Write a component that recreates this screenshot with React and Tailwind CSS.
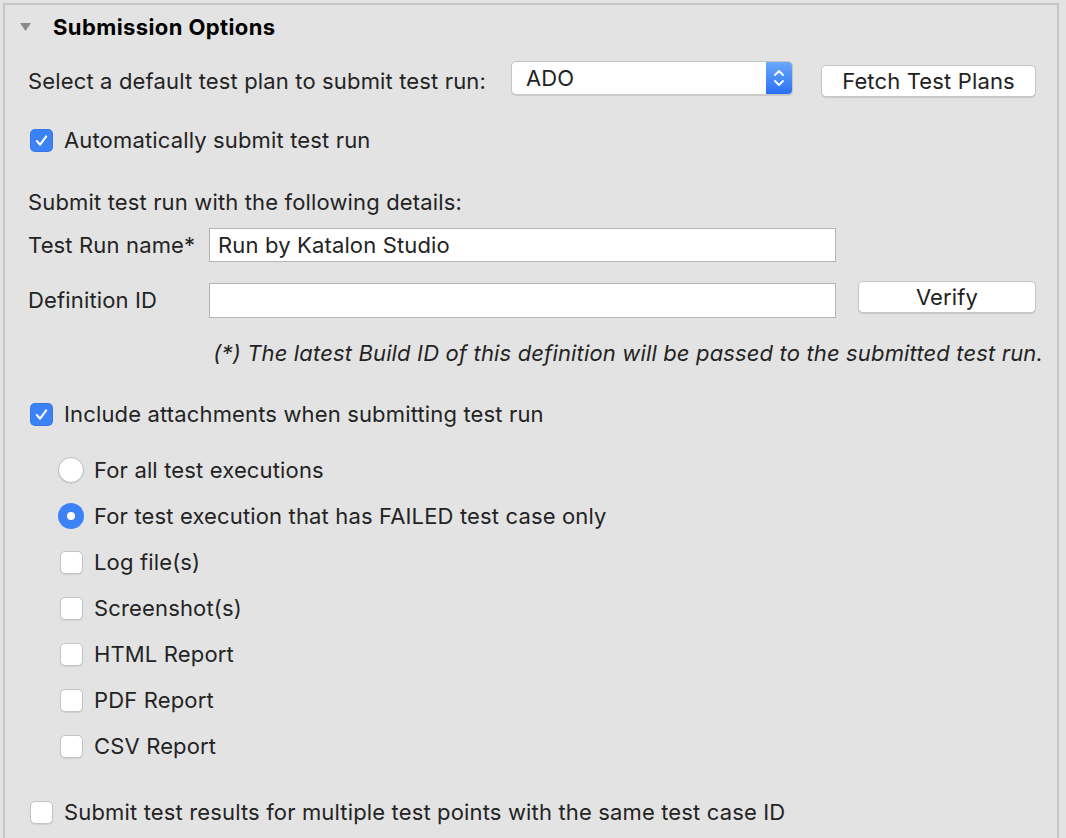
import React from 'react';

const font = { fontFamily: 'Inter, "Noto Sans", sans-serif' };

const Check = ({ checked }) =>
  checked ? (
    <span className="w-[23px] h-[23px] rounded-[5px] bg-[#3b82f6] flex items-center justify-center shrink-0 shadow-[inset_0_0_0_1px_rgba(0,0,0,0.08)]">
      <svg width="15" height="15" viewBox="0 0 16 16" fill="none" stroke="white" strokeWidth="2.2" strokeLinecap="round" strokeLinejoin="round">
        <polyline points="3 8.5 6.5 12.5 13 3.5" />
      </svg>
    </span>
  ) : (
    <span className="w-[23px] h-[23px] rounded-[5px] bg-white border border-[#c3c3c3] shrink-0 shadow-[0_1px_1px_rgba(0,0,0,0.08)]" />
  );

const Radio = ({ on }) =>
  on ? (
    <span className="w-[26px] h-[26px] rounded-full bg-[#3b82f6] flex items-center justify-center shrink-0">
      <span className="w-[8px] h-[8px] rounded-full bg-white" />
    </span>
  ) : (
    <span className="w-[26px] h-[26px] rounded-full bg-white border border-[#bdbdbd] shrink-0 shadow-[0_1px_1px_rgba(0,0,0,0.08)]" />
  );

const MacButton = ({ children, className }) => (
  <div className={`bg-white rounded-[5px] border border-[#c6c6c6] shadow-[0_1px_1px_rgba(0,0,0,0.12)] flex items-center justify-center text-[#222] ${className}`}>
    {children}
  </div>
);

export default function App() {
  const subOptions = [
    { type: 'radio', label: 'For all test executions' },
    { type: 'radio', label: 'For test execution that has FAILED test case only', on: true },
    { type: 'check', label: 'Log file(s)' },
    { type: 'check', label: 'Screenshot(s)' },
    { type: 'check', label: 'HTML Report' },
    { type: 'check', label: 'PDF Report' },
    { type: 'check', label: 'CSV Report' },
  ];

  return (
    <div className="w-[1066px] h-[838px] bg-[#e3e3e3] overflow-hidden pt-[3px] pl-[3px] text-[#232323]" style={font}>
      <div className="w-[1056px] h-[900px] border-2 border-[#c6c6c6] text-[22px] tracking-[0.15px]">
        {/* Header */}
        <div className="h-[45px] flex items-center">
          <svg width="11" height="8" viewBox="0 0 11 8" className="ml-[15px] mt-[-2px]">
            <polygon points="0,0 11,0 5.5,8" fill="#8a8a8e" />
          </svg>
          <span className="ml-[22px] font-bold text-[22px] tracking-[0.4px] text-black">Submission Options</span>
        </div>

        {/* Test plan select */}
        <div className="h-[58px] flex items-center pl-[23px]">
          <span className="w-[483px] mt-[4px]">Select a default test plan to submit test run:</span>
          <div className="w-[282px] h-[34px] flex rounded-[5px] bg-white border border-[#c6c6c6] shadow-[0_1px_1px_rgba(0,0,0,0.12)] overflow-hidden mt-[-2px]">
            <span className="flex-1 flex items-center pl-[14px]">ADO</span>
            <span className="w-[26px] bg-gradient-to-b from-[#6aa8fb] to-[#2a6ff4] flex items-center justify-center">
              <svg width="12" height="22" viewBox="0 0 12 22" fill="none" stroke="white" strokeWidth="1.8" strokeLinecap="round" strokeLinejoin="round">
                <polyline points="2 8 6 4 10 8" />
                <polyline points="2 14 6 18 10 14" />
              </svg>
            </span>
          </div>
          <MacButton className="ml-[28px] w-[215px] h-[32px] mt-[4px]">Fetch Test Plans</MacButton>
        </div>

        {/* Auto submit */}
        <div className="h-[64px] flex items-center pl-[25px] gap-[11px]">
          <Check checked />
          <span>Automatically submit test run</span>
        </div>

        <div className="h-[4px]" />
        <div className="h-[52px] flex items-center pl-[23px]">Submit test run with the following details:</div>

        {/* Test run name */}
        <div className="h-[34px] flex items-center pl-[23px]">
          <span className="w-[181px]">Test Run name*</span>
          <div className="w-[627px] h-[34px] bg-white border border-[#b5b5b5] flex items-center pl-[8px]">Run by Katalon Studio</div>
        </div>

        <div className="h-[21px]" />

        {/* Definition ID */}
        <div className="h-[35px] flex items-center pl-[23px]">
          <span className="w-[181px]">Definition ID</span>
          <div className="w-[627px] h-[35px] bg-white border border-[#b5b5b5]" />
          <MacButton className="ml-[22px] w-[178px] h-[32px] mt-[-7px]">Verify</MacButton>
        </div>

        <div className="h-[18px]" />
        <div className="h-[34px] flex items-center justify-end pr-[14px] italic whitespace-nowrap">
          (*) The latest Build ID of this definition will be passed to the submitted test run.
        </div>

        <div className="h-[20px]" />
        {/* Include attachments */}
        <div className="h-[48px] flex items-center pl-[25px] gap-[11px]">
          <Check checked />
          <span>Include attachments when submitting test run</span>
        </div>

        <div className="h-[9px]" />
        {subOptions.map((o) => (
          <div key={o.label} className="h-[46px] flex items-center">
            {o.type === 'radio' ? (
              <span className="ml-[53px] w-[26px] flex justify-center">
                <Radio on={o.on} />
              </span>
            ) : (
              <span className="ml-[55px] w-[24px] flex">
                <Check />
              </span>
            )}
            <span className="ml-[10px]">{o.label}</span>
          </div>
        ))}

        <div className="h-[20px]" />
        <div className="h-[46px] flex items-center pl-[25px] gap-[11px]">
          <Check />
          <span>Submit test results for multiple test points with the same test case ID</span>
        </div>
      </div>
    </div>
  );
}
